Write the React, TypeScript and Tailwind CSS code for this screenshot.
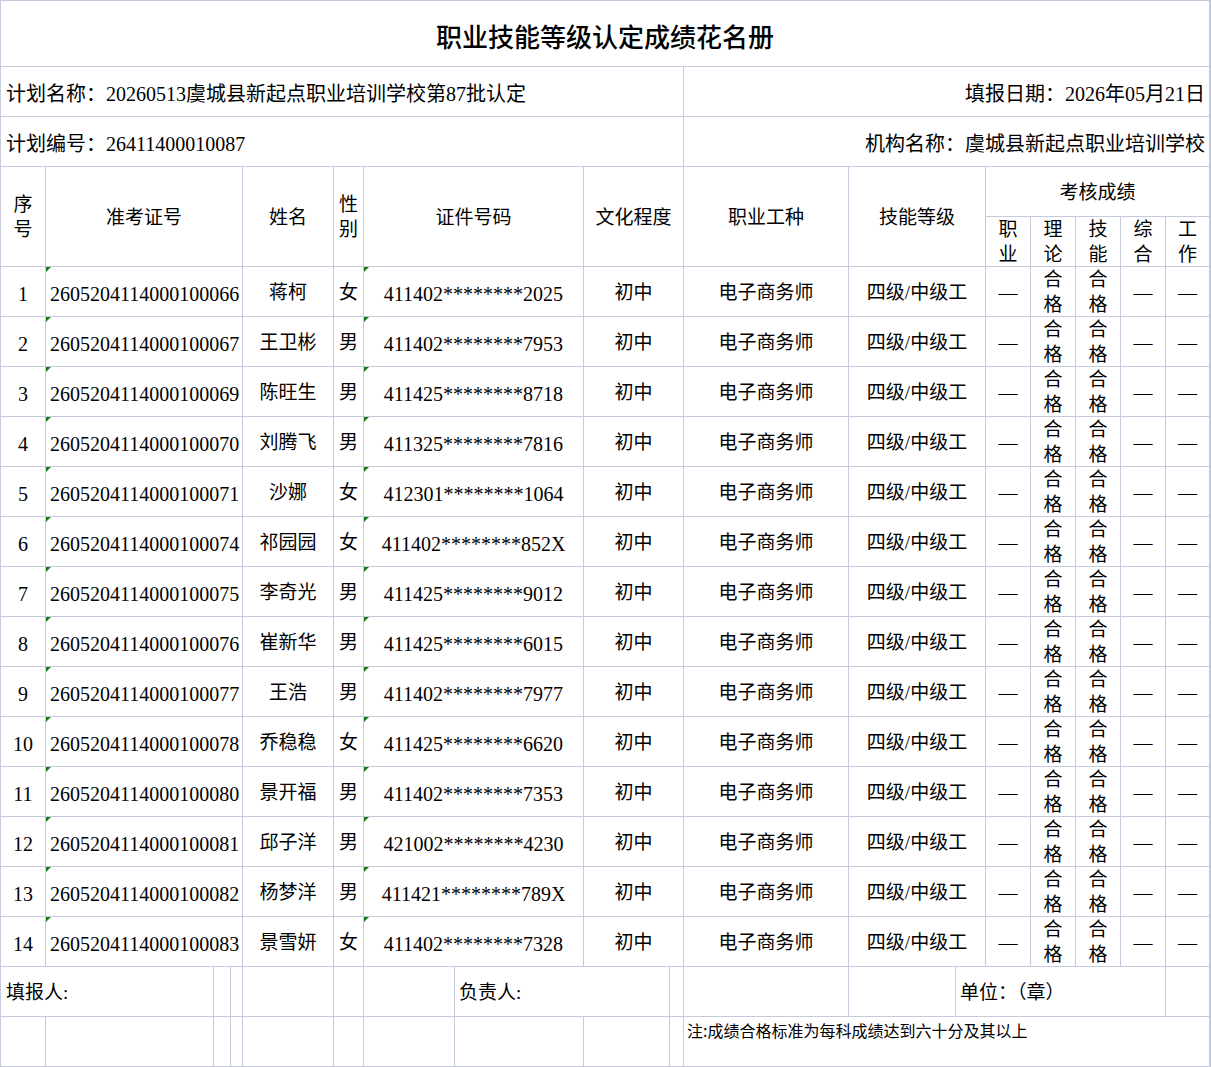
const rows = [
  ["1","2605204114000100066","蒋柯","女","411402********2025"],
  ["2","2605204114000100067","王卫彬","男","411402********7953"],
  ["3","2605204114000100069","陈旺生","男","411425********8718"],
  ["4","2605204114000100070","刘腾飞","男","411325********7816"],
  ["5","2605204114000100071","沙娜","女","412301********1064"],
  ["6","2605204114000100074","祁园园","女","411402********852X"],
  ["7","2605204114000100075","李奇光","男","411425********9012"],
  ["8","2605204114000100076","崔新华","男","411425********6015"],
  ["9","2605204114000100077","王浩","男","411402********7977"],
  ["10","2605204114000100078","乔稳稳","女","411425********6620"],
  ["11","2605204114000100080","景开福","男","411402********7353"],
  ["12","2605204114000100081","邱子洋","男","421002********4230"],
  ["13","2605204114000100082","杨梦洋","男","411421********789X"],
  ["14","2605204114000100083","景雪妍","女","411402********7328"],
];

const C = "bg-white flex items-center justify-center overflow-hidden relative pt-[4px] whitespace-nowrap";
const Tri = () => (
  <span className="absolute left-0 top-0 w-0 h-0 border-t-[5px] border-r-[5px] border-t-[#1a7a1a] border-r-transparent" />
);
const V = ({ a, b }: { a: string; b: string }) => (
  <div className="flex flex-col items-center leading-[25px] -mt-[4px]"><span>{a}</span><span>{b}</span></div>
);

export default function App() {
  return (
    <div
      className="w-[1211px] bg-[#c5cbdc] p-px grid gap-px text-[19px] text-black"
      style={{ fontFamily: '"Liberation Serif", "Noto Sans CJK SC", serif' }}
    >
      <div className="grid gap-px grid-cols-[44px_167px_16px_11px_90px_29px_90px_128px_85px_13px_164px_106px_29px_44px_44px_44px_44px_43px] grid-rows-[65px_49px_49px_49px_49px_repeat(14,49px)_49px_49px]">
        <div className={`${C} col-span-18 font-medium text-[26px]`} style={{ fontFamily: '"Noto Sans CJK SC", sans-serif' }}>职业技能等级认定成绩花名册</div>
        <div className={`${C} col-span-10 !justify-start pl-[5px] text-[20px]`}>计划名称：20260513虞城县新起点职业培训学校第87批认定</div>
        <div className={`${C} col-span-8 !justify-end pr-[4px] text-[20px]`}>填报日期：2026年05月21日</div>
        <div className={`${C} col-span-10 !justify-start pl-[5px] text-[20px]`}>计划编号：26411400010087</div>
        <div className={`${C} col-span-8 !justify-end pr-[4px] text-[20px]`}>机构名称：虞城县新起点职业培训学校</div>

        <div className={`${C} row-span-2`}><V a="序" b="号" /></div>
        <div className={`${C} col-span-3 row-span-2`}>准考证号</div>
        <div className={`${C} row-span-2`}>姓名</div>
        <div className={`${C} row-span-2`}><V a="性" b="别" /></div>
        <div className={`${C} col-span-2 row-span-2`}>证件号码</div>
        <div className={`${C} col-span-2 row-span-2`}>文化程度</div>
        <div className={`${C} row-span-2`}>职业工种</div>
        <div className={`${C} col-span-2 row-span-2`}>技能等级</div>
        <div className={`${C} col-span-5`}>考核成绩</div>
        <div className={C}><V a="职" b="业" /></div>
        <div className={C}><V a="理" b="论" /></div>
        <div className={C}><V a="技" b="能" /></div>
        <div className={C}><V a="综" b="合" /></div>
        <div className={C}><V a="工" b="作" /></div>

        {rows.map((r) => (
          <div key={r[0]} className="contents">
            <div className={`${C} text-[20px]`}>{r[0]}</div>
            <div className={`${C} col-span-3 text-[20px] !justify-start pl-[4px]`}><Tri />{r[1]}</div>
            <div className={C}>{r[2]}</div>
            <div className={C}>{r[3]}</div>
            <div className={`${C} col-span-2 text-[20px]`}><Tri />{r[4]}</div>
            <div className={`${C} col-span-2`}>初中</div>
            <div className={C}>电子商务师</div>
            <div className={`${C} col-span-2`}>四级/中级工</div>
            <div className={C}>—</div>
            <div className={C}><V a="合" b="格" /></div>
            <div className={C}><V a="合" b="格" /></div>
            <div className={C}>—</div>
            <div className={C}>—</div>
          </div>
        ))}

        <div className={`${C} col-span-2 !justify-start pl-[5px]`}>填报人:</div>
        <div className={C} /><div className={C} /><div className={C} /><div className={C} /><div className={C} />
        <div className={`${C} col-span-2 !justify-start pl-[4px]`}>负责人:</div>
        <div className={C} /><div className={C} /><div className={C} />
        <div className={`${C} col-span-5 !justify-start pl-[4px]`}>单位：（章）</div>
        <div className={C} />

        {Array.from({ length: 10 }).map((_, i) => <div key={i} className={C} />)}
        <div className={`${C} col-span-8 !items-start !justify-start pl-[3px] !pt-[1px] text-[16px]`} style={{ fontFamily: '"Noto Sans CJK SC", sans-serif' }}>注:成绩合格标准为每科成绩达到六十分及其以上</div>
      </div>
    </div>
  );
}
